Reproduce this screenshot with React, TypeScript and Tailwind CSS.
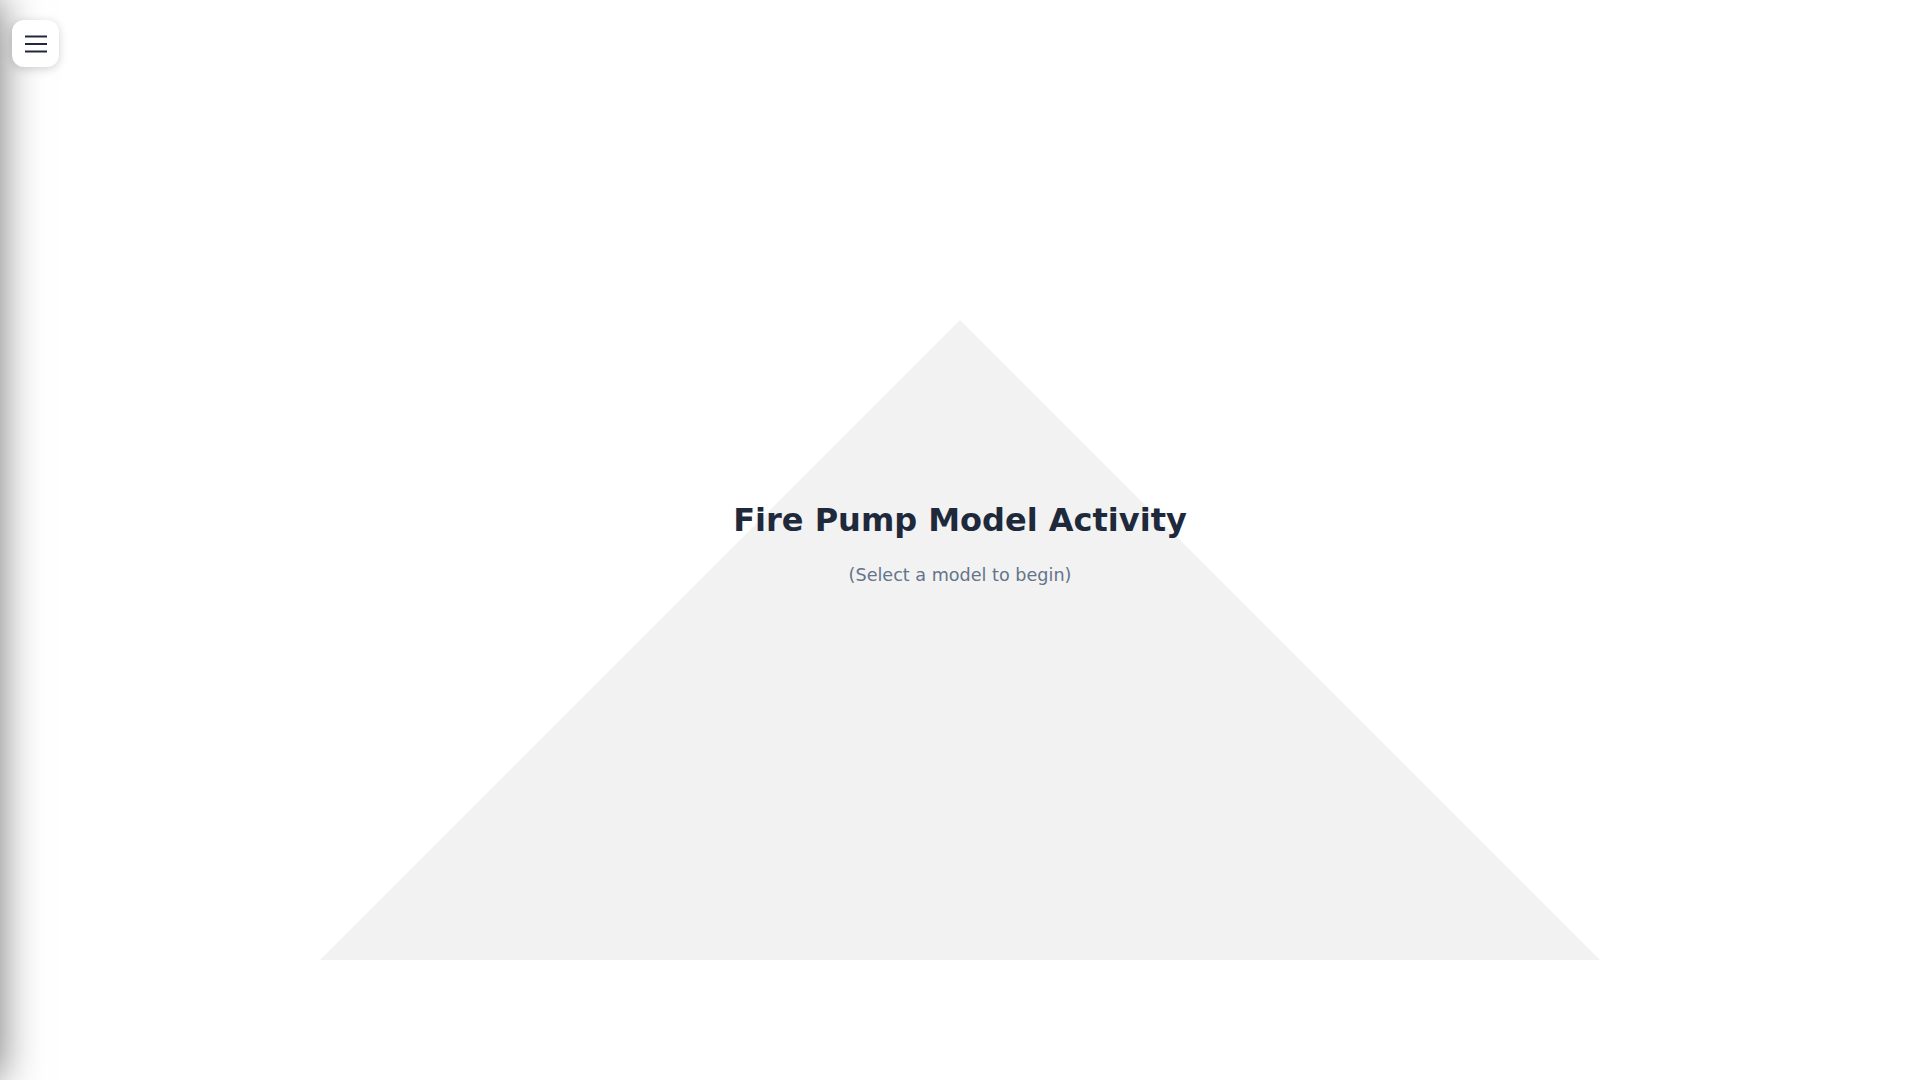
export default function App() {
  return (
    <div
      className="relative h-screen w-full overflow-hidden bg-white"
      style={{ fontFamily: '"DejaVu Sans", sans-serif' }}
    >
      {/* Off-canvas drawer, only its shadow shows */}
      <div className="absolute top-0 left-[-320px] h-full w-[320px] bg-white shadow-[0_0_40px_rgba(0,0,0,0.55)]" />

      {/* Background triangle */}
      <div className="absolute left-1/2 top-[320px] -translate-x-1/2 h-0 w-0 border-l-[640px] border-r-[640px] border-b-[640px] border-l-transparent border-r-transparent border-b-[#f2f2f2]" />

      {/* Menu button */}
      <button className="absolute left-[12px] top-[20px] z-20 flex h-[47px] w-[47px] items-center justify-center rounded-xl bg-white shadow-[0_2px_10px_rgba(0,0,0,0.18)]">
        <svg width="24" height="18" viewBox="0 0 24 18" fill="none">
          <path d="M1 1.5h22M1 9h22M1 16.5h22" stroke="#1e293b" strokeWidth="2" />
        </svg>
      </button>

      {/* Title */}
      <main className="relative z-10 flex h-full flex-col items-center justify-center pt-[4px] text-center">
        <h1 className="text-[32px] font-bold text-[#1e293b]">
          Fire Pump Model Activity
        </h1>
        <p className="mt-[18px] text-[17.6px] text-[#64748b]">(Select a model to begin)</p>
      </main>
    </div>
  );
}
